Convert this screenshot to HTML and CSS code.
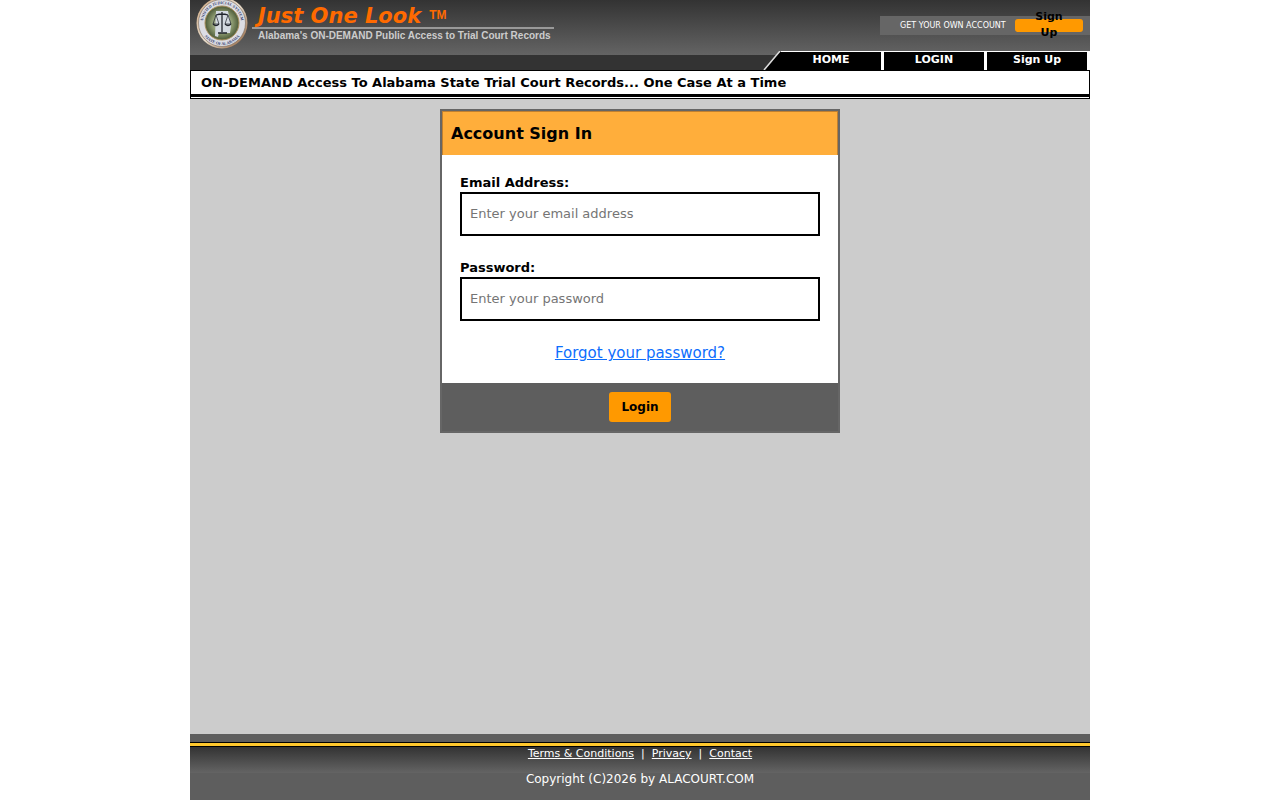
FILE: index.html
```html
<!DOCTYPE html>
<html lang="en">
<head>
    <meta charset="utf-8">
    <title>Just One Look - Account Sign In</title>
    <link rel="stylesheet" href="styles.css">
</head>
<body>
<div class="container">
    <header class="header">
        <div class="header-top">
            <svg class="seal" viewBox="0 0 52 52" width="52" height="52" aria-hidden="true">
                <defs>
                    <path id="ringTop" d="M7 26a19 19 0 0 1 38 0"/>
                    <path id="ringBottom" d="M4 26a22 22 0 0 0 44 0"/>
                    <linearGradient id="rim" x1="0" y1="0" x2="1" y2="1">
                        <stop offset="0" stop-color="#c9a27c"/>
                        <stop offset="0.5" stop-color="#e8dccb"/>
                        <stop offset="1" stop-color="#8a5a34"/>
                    </linearGradient>
                    <radialGradient id="land">
                        <stop offset="0" stop-color="#c5ccc0"/>
                        <stop offset="0.6" stop-color="#8c9a70"/>
                        <stop offset="1" stop-color="#4c5a38"/>
                    </radialGradient>
                </defs>
                <circle cx="26" cy="26" r="25.5" fill="url(#rim)"/>
                <circle cx="26" cy="26" r="23.5" fill="#dcdde4" stroke="#77685a" stroke-width="0.6"/>
                <circle cx="26" cy="26" r="17" fill="url(#land)" stroke="#a9905e"/>
                <path d="M20 14h12l3 15-1 7H23l-1 4-3-1z" fill="#d3d9e0"/>
                <g fill="none" stroke="#20242c">
                    <path d="M26 15v20M20 18q6-2 12 0M22 36h9" stroke-width="1.3"/>
                    <path d="M20 18l-3 9h6zM32 18l-3 9h6z" stroke-width="0.7"/>
                    <path d="M17 27q3 3 6 0M29 27q3 3 6 0" stroke-width="1.3"/>
                </g>
                <text class="seal-text"><textPath href="#ringTop" startOffset="50%">UNIFIED JUDICIAL SYSTEM</textPath></text>
                <text class="seal-text"><textPath href="#ringBottom" startOffset="50%">STATE OF ALABAMA</textPath></text>
            </svg>
            <div class="brand">
                <div class="brand-name">Just One Look <span class="tm">TM</span></div>
                <div class="brand-tagline">Alabama's ON-DEMAND Public Access to Trial Court Records</div>
            </div>
            <div class="account-strip">
                <span>GET YOUR OWN ACCOUNT</span>
                <button type="button" class="btn btn-signup">Sign Up</button>
            </div>
        </div>
        <nav class="tabs">
            <svg class="tab-edge" viewBox="0 0 18 19" width="18" height="19" aria-hidden="true">
                <path d="M2 19L17 1h1v18z" fill="#000"/>
                <path d="M1 19L17 0" stroke="#ddd" stroke-width="1.5"/>
            </svg>
            <a class="tab" href="#">HOME</a>
            <a class="tab" href="#">LOGIN</a>
            <a class="tab" href="#">Sign Up</a>
        </nav>
    </header>

    <div class="title-bar">
        <h1>ON-DEMAND Access To Alabama State Trial Court Records... One Case At a Time</h1>
    </div>

    <main class="content">
        <form class="login-panel">
            <h2 class="panel-heading">Account Sign In</h2>
            <div class="panel-body">
                <div class="form-group">
                    <label for="email">Email Address:</label>
                    <input type="email" id="email" placeholder="Enter your email address">
                </div>
                <div class="form-group">
                    <label for="password">Password:</label>
                    <input type="password" id="password" placeholder="Enter your password">
                </div>
                <a class="forgot" href="#">Forgot your password?</a>
            </div>
            <div class="panel-footer">
                <button type="submit" class="btn btn-login">Login</button>
            </div>
        </form>
    </main>

    <footer class="footer">
        <div class="footer-line"></div>
        <div class="footer-links">
            <a href="#">Terms &amp; Conditions</a>
            <span>|</span>
            <a href="#">Privacy</a>
            <span>|</span>
            <a href="#">Contact</a>
        </div>
        <div class="copyright">Copyright (C)2026 by ALACOURT.COM</div>
    </footer>
</div>
</body>
</html>
```
FILE: styles.css
```css
* {
    box-sizing: border-box;
}

body {
    margin: 0;
    background-color: #fff;
    color: #000;
    font-family: "DejaVu Sans", Verdana, sans-serif;
    font-size: 13px;
}

.container {
    display: flex;
    flex-direction: column;
    max-width: 900px;
    min-height: 100vh;
    margin: 0 auto;
    background-color: #ccc;
}

/* header */
.header {
    background: linear-gradient(#333, #646464) no-repeat top / 100% 55px #333;
}

.header-top {
    display: flex;
    align-items: flex-start;
    height: 51px;
    padding-left: 6px;
}

.seal {
    flex: none;
    margin-top: -3px;
}

.seal-text {
    font-family: "Liberation Serif", serif;
    font-size: 4px;
    font-weight: bold;
    fill: #34406e;
    text-anchor: middle;
}

.brand {
    margin-left: 4px;
    padding-top: 6px;
    white-space: nowrap;
}

.brand-name {
    display: flex;
    align-items: flex-start;
    gap: 8px;
    height: 23px;
    padding-left: 6px;
    border-bottom: 2px solid #999;
    color: #ff6a00;
    font-size: 21px;
    font-style: italic;
    font-weight: bold;
    line-height: 21px;
}

.tm {
    font-family: "Liberation Sans", Arial, sans-serif;
    font-size: 12px;
    font-style: normal;
    line-height: 18px;
}

.brand-tagline {
    padding: 0 3px 0 6px;
    color: #ccc;
    font-family: "Liberation Sans", Arial, sans-serif;
    font-size: 10px;
    font-weight: bold;
    line-height: 14px;
}

.account-strip {
    display: flex;
    justify-content: space-between;
    align-items: center;
    width: 210px;
    height: 19px;
    margin: 16px 0 0 auto;
    padding: 0 7px 0 20px;
    background-color: #666;
    color: #fff;
    font-size: 8px;
    line-height: 8px;
    white-space: nowrap;
}

.btn {
    border: none;
    border-radius: 3px;
    background-color: #f90;
    color: #000;
    font-family: inherit;
    font-weight: bold;
    cursor: pointer;
}

.btn-signup {
    display: flex;
    align-items: center;
    justify-content: center;
    width: 68px;
    height: 13px;
    padding: 0 16px 2px;
    font-size: 11px;
    line-height: 16px;
    white-space: normal;
}

.tabs {
    display: flex;
    justify-content: flex-end;
    height: 19px;
}

.tab {
    width: 103px;
    border-top: 1px solid #fff;
    border-right: 3px solid #fff;
    background-color: #000;
    color: #fff;
    font-size: 11px;
    font-weight: bold;
    line-height: 15px;
    text-align: center;
    text-decoration: none;
}

/* page title */
.title-bar {
    padding-bottom: 1px;
    border: 1px solid #000;
    background-color: #fff;
}

.title-bar h1 {
    margin: 0;
    padding: 0 10px;
    border-bottom: 3px solid #000;
    font-size: 13px;
    line-height: 23px;
}

/* sign in form */
.content {
    flex: 1;
    padding: 10px;
}

.login-panel {
    max-width: 400px;
    margin: 0 auto;
    border: 2px solid #666;
    background-color: #fff;
}

.panel-heading {
    margin: 0;
    padding: 0 8px;
    border: 1px solid #c08030;
    border-bottom: none;
    background-color: #ffae3b;
    font-size: 16px;
    line-height: 43px;
}

.panel-body {
    padding: 18px 18px 19px;
}

.form-group {
    margin-bottom: 22px;
}

.form-group label {
    display: block;
    font-size: 13px;
    font-weight: bold;
    line-height: 19px;
}

.form-group input {
    display: block;
    width: 100%;
    height: 44px;
    padding: 0 8px 2px;
    border: 2px solid #000;
    background-color: #fff;
    font-family: inherit;
    font-size: 13px;
}

.forgot {
    display: block;
    color: #0d6efd;
    font-size: 15px;
    line-height: 21px;
    text-align: center;
}

.panel-footer {
    padding: 9px;
    background-color: #5e5e5e;
    text-align: center;
}

.btn-login {
    display: block;
    height: 30px;
    margin: 0 auto;
    padding: 0 12px;
    font-size: 12px;
}

/* footer */
.footer {
    padding-top: 8px;
    background-color: #5e5e5e;
    color: #fff;
    text-align: center;
}

.footer-line {
    height: 5px;
    border: solid #000;
    border-width: 1px 0;
    background-color: #ffc82d;
}

.footer-links {
    display: flex;
    justify-content: center;
    gap: 7px;
    height: 26px;
    background: linear-gradient(#333, #646464);
    font-size: 11px;
    line-height: 14px;
}

.footer-links a {
    color: #fff;
}

.copyright {
    height: 27px;
    font-size: 12px;
    line-height: 12px;
}
```
